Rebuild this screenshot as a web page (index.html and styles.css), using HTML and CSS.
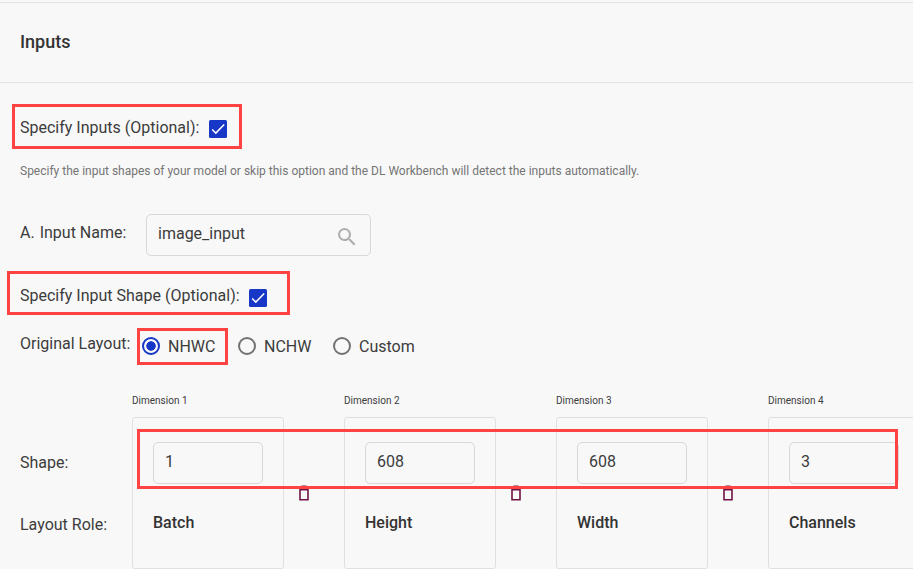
FILE: index.html
```html
<!DOCTYPE html>
<html lang="en">
<head>
<meta charset="utf-8">
<title>Inputs</title>
<link rel="stylesheet" href="styles.css">
</head>
<body>
<main class="panel">
  <header class="panel-header"><h2>Inputs</h2></header>
  <section class="row specify-inputs">
    <span class="t-specify">Specify Inputs (Optional):</span>
    <svg class="checkbox" viewBox="0 0 18 18"><rect width="18" height="18" rx="1.5"/><path d="M3.2 9.4 6.8 13.1 15.2 4.5"/></svg>
    <i class="mark mark-inputs"></i>
  </section>
  <p class="hint">Specify the input shapes of your model or skip this option and the DL Workbench will detect the inputs automatically.</p>
  <section class="row name-row">
    <span class="name-label"><span>A.</span><span>Input Name:</span></span>
    <div class="field search"><span>image_input</span>
      <svg class="glass" viewBox="0 0 18 18"><path d="M12.5 11h-.79l-.28-.27A6.47 6.47 0 0 0 13 6.5 6.5 6.5 0 1 0 6.5 13c1.61 0 3.09-.59 4.23-1.57l.27.28v.79l5 4.99L17.49 16l-4.99-5zm-6 0C4.01 11 2 8.99 2 6.5S4.01 2 6.5 2 11 4.01 11 6.5 8.99 11 6.5 11z"/></svg>
    </div>
  </section>
  <section class="row specify-shape">
    <span>Specify Input Shape (Optional):</span>
    <svg class="checkbox" viewBox="0 0 18 18"><rect width="18" height="18" rx="1.5"/><path d="M3.2 9.4 6.8 13.1 15.2 4.5"/></svg>
    <i class="mark mark-shape"></i>
  </section>
  <section class="row layout-row">
    <span class="layout-label">Original Layout:</span>
    <span class="option"><i class="radio on"></i><span>NHWC</span></span>
    <span class="option"><i class="radio"></i><span>NCHW</span></span>
    <span class="option"><i class="radio"></i><span>Custom</span></span>
    <i class="mark mark-layout"></i>
  </section>
  <section class="shape">
    <div class="shape-labels"><span>Shape:</span><span>Layout Role:</span></div>
    <div class="dimension"><span class="caption">Dimension 1</span><div class="card"><div class="field">1</div><b>Batch</b></div></div>
    <svg class="trash" viewBox="0 0 10 16"><path class="lid" d="M2.5 .5h5"/><path class="can" d="M1 4.7h8v10H1z"/></svg>
    <div class="dimension"><span class="caption">Dimension 2</span><div class="card"><div class="field">608</div><b>Height</b></div></div>
    <svg class="trash" viewBox="0 0 10 16"><path class="lid" d="M2.5 .5h5"/><path class="can" d="M1 4.7h8v10H1z"/></svg>
    <div class="dimension"><span class="caption">Dimension 3</span><div class="card"><div class="field">608</div><b>Width</b></div></div>
    <svg class="trash" viewBox="0 0 10 16"><path class="lid" d="M2.5 .5h5"/><path class="can" d="M1 4.7h8v10H1z"/></svg>
    <div class="dimension"><span class="caption">Dimension 4</span><div class="card"><div class="field">3</div><b>Channels</b></div></div>
    <i class="mark mark-dimensions"></i>
  </section>
</main>
</body>
</html>
```
FILE: styles.css
```css
* { box-sizing: border-box; }
body { margin: 0; background: #f8f8f8; color: #3c3c3c; font: 400 16px/20px Roboto, sans-serif; }
.panel { height: 569px; padding-top: 2px; overflow: hidden; }
.panel-header { height: 81px; padding: 0 0 2px 20px; display: flex; align-items: center; border: solid #e2e2e2; border-width: 1px 0; }
.panel-header h2 { margin: 0; font-size: 18px; font-weight: 500; line-height: 24px; color: #333; }
.row { position: relative; display: flex; padding-left: 20px; white-space: nowrap; }
.specify-inputs { height: 79px; padding-top: 35px; gap: 10px; }
.checkbox { width: 18px; height: 18px; flex: none; margin-top: 2px; }
.checkbox rect { fill: #1737c6; }
.checkbox path { fill: none; stroke: #fff; stroke-width: 1.5; }
.hint { margin: 0; height: 52px; padding-left: 20px; font-size: 12px; line-height: 18px; color: #757575; white-space: nowrap; }
.name-row { height: 72px; }
.name-label { display: flex; gap: 5px; width: 126px; padding-top: 9px; }
.field { height: 42px; border: 1px solid #d8d8d8; border-radius: 5px; padding: 9px 11px; }
.search { width: 225px; display: flex; justify-content: space-between; padding-right: 14px; }
.glass { width: 18px; height: 18px; margin-top: 4px; fill: #adadad; }
.specify-shape { height: 48px; gap: 9px; }
.specify-shape .checkbox { margin-top: 3px; }
.layout-row { height: 60px; }
.layout-label { width: 122px; }
.option { display: flex; gap: 8px; width: 96px; padding-top: 3px; }
.option + .option { width: 95px; }
.radio { width: 18px; height: 18px; border: 2px solid #737373; border-radius: 50%; flex: none; }
.radio.on { border-color: #1737c6; background: radial-gradient(circle, #1737c6 4.4px, transparent 5px); }
.shape { position: relative; display: flex; padding-left: 20px; }
.shape-labels { width: 112px; flex: none; display: flex; flex-direction: column; gap: 42px; padding-top: 59px; white-space: nowrap; }
.dimension { width: 152px; flex: none; }
.caption { display: block; height: 23px; font-size: 10px; line-height: 14px; }
.card { height: 152px; border: 1px solid #e0e0e0; border-radius: 3px; padding: 24px 20px; }
.card b { display: block; margin-top: 29px; font-weight: 500; color: #333; }
.trash { width: 10px; height: 16px; flex: none; margin: 91px 35px 0 15px; }
.trash path { fill: none; stroke: #701342; stroke-width: 1.6; }
.trash .lid { stroke: #b889a0; stroke-width: 1; }
.mark { position: absolute; border: 3px solid #ff4343; pointer-events: none; }
.mark-inputs { left: 12px; top: 21px; width: 230px; height: 45px; }
.mark-shape { left: 7px; top: -15px; width: 283px; height: 44px; }
.mark-layout { left: 137px; top: -6px; width: 91px; height: 37px; }
.mark-dimensions { left: 137px; top: 35px; width: 761px; height: 60px; }
```
